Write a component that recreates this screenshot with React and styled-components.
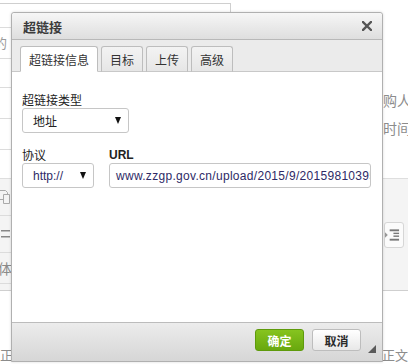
import React from 'react';
import styled, { createGlobalStyle } from 'styled-components';

const GlobalStyle = createGlobalStyle`
  html, body {
    margin: 0;
    padding: 0;
    background: #ffffff;
  }
  body {
    font-family: "Liberation Sans", "Noto Sans CJK SC", sans-serif;
    font-size: 12px;
    color: #333;
  }
`;

const cjk = `"Noto Sans CJK SC", "Liberation Sans", sans-serif`;

const StyledPage = styled.div`
  position: relative;
  width: 408px;
  height: 364px;
  overflow: hidden;
`;

/* the editor page that lies behind the dialog */
const StyledBackdrop = styled.div`
  display: flex;
  flex-direction: column;
  height: 100%;
`;

const StyledTopFrame = styled.div`
  margin-top: 3px;
  width: 230px;
  height: 23px;
  border-top: 1px solid #cfcfcf;
  border-right: 1px solid #cfcfcf;
`;

const StyledSides = styled.div`
  display: flex;
  justify-content: space-between;
  height: 151px;
`;

const StyledLeftStrip = styled.div`
  width: 12px;
  overflow: hidden;
  display: flex;
  flex-direction: column;
`;

const StyledStripRow = styled.div`
  flex: 0 0 ${p => p.h}px;
  border-top: 1px solid #dcdcdc;
  color: #9a9a9a;
  font-family: ${cjk};
  font-size: 13px;
  line-height: ${p => p.h - 1}px;
  white-space: nowrap;
  text-indent: -6px;
`;

const StyledRightStrip = styled.div`
  width: 25px;
  padding-top: 64px;
  display: flex;
  flex-direction: column;
  gap: 10px;
  color: #8c8c8c;
  font-family: ${cjk};
  font-size: 14px;
  line-height: 18px;
  white-space: nowrap;
  overflow: hidden;
`;

const StyledBand = styled.div`
  height: 111px;
  background: #f4f4f4;
  border-top: 1px solid #dedede;
  border-bottom: 1px solid #cfcfcf;
  display: flex;
  justify-content: space-between;
  align-items: center;
`;

const StyledBandColumn = styled.div`
  width: 12px;
  overflow: hidden;
  align-self: stretch;
  display: flex;
  flex-direction: column;
`;

const StyledBandTool = styled.div`
  flex: 0 0 ${p => p.h}px;
  border-bottom: 1px solid #dcdcdc;
  display: flex;
  align-items: center;
  justify-content: flex-end;
  color: #8a8a8a;
  font-family: ${cjk};
  font-size: 14px;
  white-space: nowrap;
`;

const StyledRightTool = styled.div`
  width: 20px;
  height: 26px;
  margin-right: 4px;
  background: #fbfbfb;
  border: 1px solid #d6d6d6;
  border-radius: 3px;
  display: flex;
  align-items: center;
  justify-content: flex-end;
  padding-right: 3px;
  box-sizing: border-box;
  color: #666;
`;

const StyledFootText = styled.div`
  margin-top: auto;
  display: flex;
  justify-content: space-between;
  padding-bottom: 1px;
  color: #8c8c8c;
  font-family: ${cjk};
  font-size: 13px;
  line-height: 16px;
`;

/* dialog */
const StyledDialog = styled.div`
  position: absolute;
  left: 11px;
  top: 12px;
  width: 372px;
  height: 350px;
  box-sizing: border-box;
  border: 1px solid #b0b0b0;
  border-radius: 3px 3px 0 0;
  background: #ffffff;
  display: flex;
  flex-direction: column;
  box-shadow: 0 0 3px rgba(0, 0, 0, 0.15);
`;

const StyledTitleBar = styled.div`
  flex: 0 0 26px;
  display: flex;
  align-items: center;
  justify-content: space-between;
  padding: 0 10px 0 11px;
  background: linear-gradient(#f6f6f6, #dedede);
  border-bottom: 1px solid #b8b8b8;
  border-radius: 3px 3px 0 0;
`;

const StyledTitle = styled.div`
  font-family: ${cjk};
  font-size: 13px;
  font-weight: bold;
  color: #3c3c3c;
`;

const StyledClose = styled.div`
  width: 10px;
  height: 10px;
  display: flex;
`;

const StyledTabStrip = styled.div`
  flex: 0 0 31px;
  display: flex;
  align-items: flex-end;
  gap: 3px;
  padding-left: 8px;
  background: #ebebeb;
  border-bottom: 1px solid #c8c8c8;
`;

const StyledTab = styled.div`
  height: 26px;
  margin-bottom: -1px;
  padding: 0 8px;
  box-sizing: border-box;
  display: flex;
  align-items: center;
  font-family: ${cjk};
  font-size: 12px;
  color: #333;
  background: ${p => (p.active ? '#ffffff' : 'linear-gradient(#f3f3f3, #e6e6e6)')};
  border: 1px solid #bdbdbd;
  border-bottom: 1px solid ${p => (p.active ? '#ffffff' : '#c8c8c8')};
  border-radius: 3px 3px 0 0;
`;

const StyledBody = styled.div`
  flex: 1;
  padding: 20px 11px 0 10px;
`;

const StyledLabel = styled.div`
  font-family: ${p => (p.latin ? '"Liberation Sans", sans-serif' : cjk)};
  font-weight: ${p => (p.latin ? 'bold' : 'normal')};
  font-size: 12px;
  line-height: 16px;
  color: #222;
`;

const StyledRow = styled.div`
  display: flex;
  gap: 15px;
  margin-top: 14px;
`;

const StyledField = styled.div`
  display: flex;
  flex-direction: column;
  flex: ${p => (p.grow ? 1 : '0 0 auto')};
  min-width: 0;
`;

const StyledSelect = styled.div`
  width: ${p => p.w}px;
  height: 25px;
  box-sizing: border-box;
  border: 1px solid #c6c6c6;
  border-radius: 3px;
  display: flex;
  align-items: center;
  justify-content: space-between;
  padding: 0 7px 0 ${p => p.pl}px;
  font-family: ${p => (p.latin ? '"Liberation Sans", sans-serif' : cjk)};
  font-size: 12px;
  color: ${p => (p.latin ? '#2e2a66' : '#222')};
  background: #ffffff;
`;

const StyledArrow = styled.span`
  width: 0;
  height: 0;
  border-left: 3.5px solid transparent;
  border-right: 3.5px solid transparent;
  border-top: 7px solid #111;
`;

const StyledInput = styled.div`
  height: 25px;
  box-sizing: border-box;
  border: 1px solid #c6c6c6;
  border-radius: 3px;
  display: flex;
  align-items: center;
  padding-left: 6px;
  overflow: hidden;
  white-space: nowrap;
  font-family: "Liberation Sans", sans-serif;
  font-size: 12px;
  letter-spacing: 0.3px;
  color: #2e2a66;
`;

const StyledFooter = styled.div`
  flex: 0 0 39px;
  border-top: 1px solid #bcbcbc;
  background: linear-gradient(#ececec, #d6d6d6);
  display: flex;
  align-items: flex-start;
  justify-content: flex-end;
  gap: 8px;
  padding: 6px 21px 0 0;
  box-sizing: border-box;
  position: relative;
`;

const StyledButton = styled.div`
  width: 49px;
  height: 22px;
  box-sizing: border-box;
  border-radius: 3px;
  display: flex;
  align-items: center;
  justify-content: center;
  font-family: ${cjk};
  font-size: 12px;
  font-weight: bold;
  color: ${p => (p.primary ? '#ffffff' : '#2b2b2b')};
  background: ${p => (p.primary ? 'linear-gradient(#86c41f, #68a80e)' : 'linear-gradient(#ffffff, #e8e8e8)')};
  border: 1px solid ${p => (p.primary ? '#5e9a0b' : '#bdbdbd')};
`;

const StyledGrip = styled.div`
  position: absolute;
  right: 6px;
  bottom: 8px;
  width: 0;
  height: 0;
  border-left: 8px solid transparent;
  border-bottom: 8px solid #5a5a5a;
`;

const CopyIcon = () => (
  <svg width="14" height="16" viewBox="0 0 14 16" style={{ flex: 'none' }}>
    <path d="M1.5 1.5h6l2 2v7h-8z" fill="none" stroke="#aaa" />
    <path d="M5.5 5.5h6v9h-6z" fill="#f4f4f4" stroke="#aaa" />
  </svg>
);

const ListIcon = () => (
  <svg width="18" height="12" viewBox="0 0 18 12" style={{ flex: 'none' }}>
    <circle cx="3" cy="3" r="2" fill="#888" />
    <circle cx="3" cy="9" r="2" fill="#888" />
    <rect x="7" y="2" width="9" height="1.5" fill="#888" />
    <rect x="7" y="8" width="9" height="1.5" fill="#888" />
  </svg>
);

const IndentIcon = () => (
  <svg width="16" height="12" viewBox="0 0 16 12">
    <path d="M0 3l3 3-3 3z" fill="#999" />
    <rect x="5" y="0" width="10" height="2" fill="#777" />
    <rect x="9" y="3.5" width="6" height="1.5" fill="#777" />
    <rect x="9" y="6.5" width="6" height="1.5" fill="#777" />
    <rect x="5" y="10" width="10" height="2" fill="#777" />
  </svg>
);

const CloseIcon = () => (
  <svg width="10" height="10" viewBox="0 0 10 10">
    <path d="M1 1L9 9M9 1L1 9" stroke="#555" strokeWidth="2.4" strokeLinecap="square" />
  </svg>
);

const tabs = ['超链接信息', '目标', '上传', '高级'];

const App = () => (
  <StyledPage>
    <GlobalStyle />
    <StyledBackdrop>
      <StyledTopFrame />
      <StyledSides>
        <StyledLeftStrip>
          <StyledStripRow h={30}>的“文</StyledStripRow>
          <StyledStripRow h={28} />
          <StyledStripRow h={30} />
          <StyledStripRow h={30} />
          <StyledStripRow h={33} />
        </StyledLeftStrip>
        <StyledRightStrip>
          <div>购人</div>
          <div>时间</div>
        </StyledRightStrip>
      </StyledSides>
      <StyledBand>
        <StyledBandColumn>
          <StyledBandTool h={36}><CopyIcon /></StyledBandTool>
          <StyledBandTool h={36}><ListIcon /></StyledBandTool>
          <StyledBandTool h={30}>字体</StyledBandTool>
        </StyledBandColumn>
        <StyledRightTool><IndentIcon /></StyledRightTool>
      </StyledBand>
      <StyledFootText>
        <span>正</span>
        <span>文正文</span>
      </StyledFootText>
    </StyledBackdrop>

    <StyledDialog>
      <StyledTitleBar>
        <StyledTitle>超链接</StyledTitle>
        <StyledClose><CloseIcon /></StyledClose>
      </StyledTitleBar>
      <StyledTabStrip>
        {tabs.map((t, i) => (
          <StyledTab key={t} active={i === 0}>{t}</StyledTab>
        ))}
      </StyledTabStrip>
      <StyledBody>
        <StyledField>
          <StyledLabel>超链接类型</StyledLabel>
          <StyledSelect w={107} pl={10}>
            <span>地址</span>
            <StyledArrow />
          </StyledSelect>
        </StyledField>
        <StyledRow>
          <StyledField>
            <StyledLabel>协议</StyledLabel>
            <StyledSelect w={72} pl={10} latin>
              <span>http://</span>
              <StyledArrow />
            </StyledSelect>
          </StyledField>
          <StyledField grow>
            <StyledLabel latin>URL</StyledLabel>
            <StyledInput>www.zzgp.gov.cn/upload/2015/9/201598103950</StyledInput>
          </StyledField>
        </StyledRow>
      </StyledBody>
      <StyledFooter>
        <StyledButton primary>确定</StyledButton>
        <StyledButton>取消</StyledButton>
        <StyledGrip />
      </StyledFooter>
    </StyledDialog>
  </StyledPage>
);

export default App;
